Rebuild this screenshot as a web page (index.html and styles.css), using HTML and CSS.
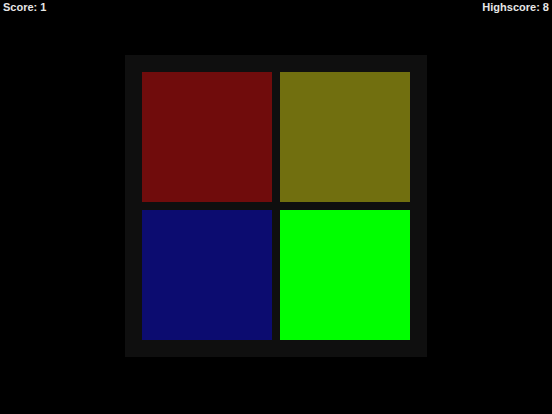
FILE: index.html
```html
<!DOCTYPE html>
<html>
<head>
<meta charset="utf-8">
<link rel="stylesheet" href="styles.css">
</head>
<body>
<div class="hud">
  <span class="score">Score: 1</span>
  <span class="high">Highscore: 8</span>
</div>
<div class="stage">
  <div class="board">
    <div class="tile red"></div>
    <div class="tile yellow"></div>
    <div class="tile blue"></div>
    <div class="tile green"></div>
  </div>
</div>
</body>
</html>
```
FILE: styles.css
```css
html, body {
  margin: 0;
  padding: 0;
  background: #000;
  width: 552px;
  height: 414px;
  overflow: hidden;
  font-family: "Liberation Sans", Arial, sans-serif;
}
.hud {
  position: absolute;
  top: 0;
  left: 0;
  right: 0;
  display: flex;
  justify-content: space-between;
  padding: 1px 3px 0 3px;
  color: #e6e6e6;
  font-weight: bold;
  font-size: 11px;
  line-height: 13px;
}
.stage {
  height: 414px;
  display: flex;
  align-items: center;
  justify-content: center;
}
.board {
  margin-top: -2px;
  background: #0f0f0f;
  padding: 17px;
  display: grid;
  grid-template-columns: 130px 130px;
  grid-template-rows: 130px 130px;
  gap: 8px;
}
.tile { width: 130px; height: 130px; }
.red { background: #700c0c; }
.yellow { background: #716f0f; }
.blue { background: #0c0c70; }
.green { background: #00ff00; }
```
